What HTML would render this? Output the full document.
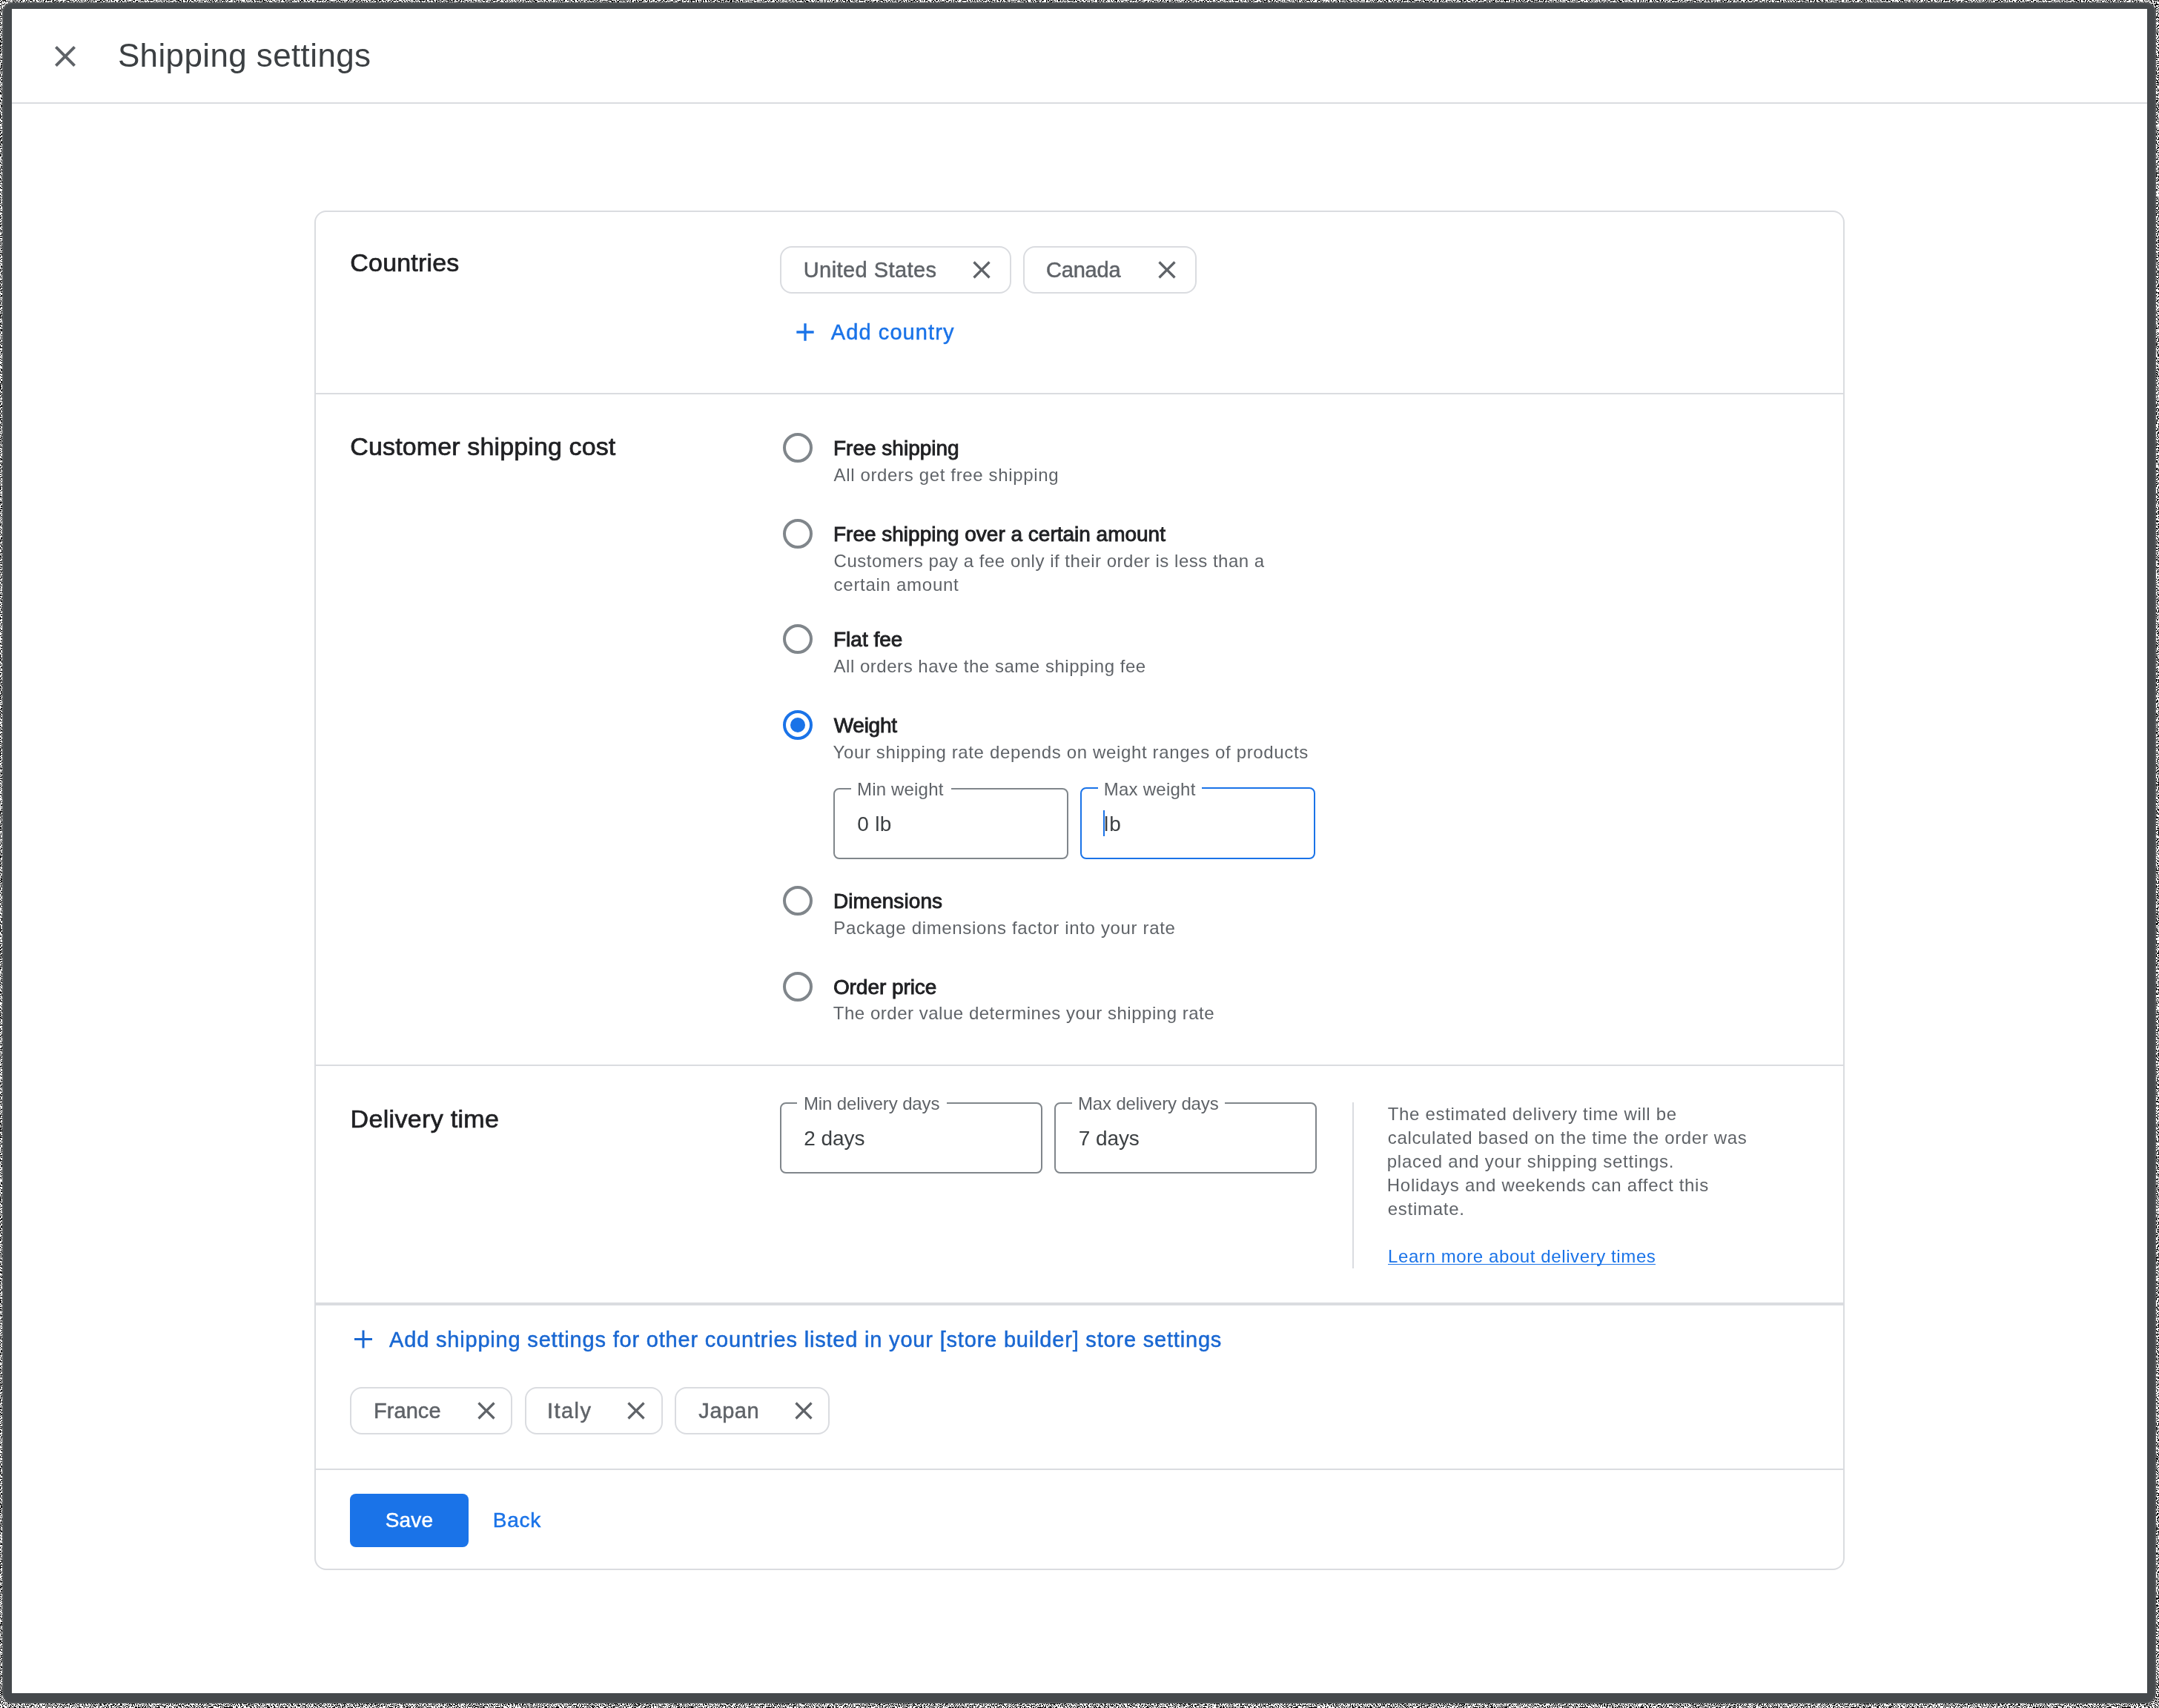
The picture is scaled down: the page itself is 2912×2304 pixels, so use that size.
<!DOCTYPE html>
<html lang="en">
<head>
<meta charset="utf-8">
<title>Shipping settings</title>
<style>
*{box-sizing:border-box;margin:0;padding:0}
html,body{width:2912px;height:2304px;overflow:hidden}
body{position:relative;background:#a6a6a6;font-family:"Liberation Sans",sans-serif}
.a{position:absolute}
#noise{position:absolute;left:0;top:0;width:2912px;height:2304px}
#frame{left:3px;top:3px;width:2904.5px;height:2295px;background:#45494c;border-radius:14px;box-shadow:inset 0 0 3px 0 #8a8a8a}
#win{left:16px;top:12px;width:2880px;height:2272px;background:#fff}
.hl{background:#dadce0}
.t{position:absolute;white-space:pre;line-height:1;font-weight:400;text-decoration:none;margin:0}
.m{-webkit-text-stroke:0.5px currentColor}
.m2{-webkit-text-stroke:0.7px currentColor}
.b{-webkit-text-stroke:0.9px currentColor}
#card{left:424px;top:284px;width:2064px;height:1834.4px;border:2px solid #dadce0;border-radius:16px}
.chip{border:2px solid #dadce0;border-radius:16px;background:#fff}
.radio{width:40px;height:40px;border:4px solid #80868b;border-radius:50%}
.radio.on{border-color:#1a73e8}
.radio.on::after{content:"";position:absolute;left:6px;top:6px;width:20px;height:20px;border-radius:50%;background:#1a73e8}
.field{border:2px solid #80868b;border-radius:8px}
.field.focus{border:2.5px solid #1a73e8}
.notch{background:#fff;height:6px}
svg{position:absolute;display:block}
</style>
</head>
<body>
<svg id="noise" width="2912" height="2304" viewBox="0 0 2912 2304">
<defs><filter id="nz" x="0" y="0" width="100%" height="100%" color-interpolation-filters="sRGB">
<feTurbulence type="fractalNoise" baseFrequency="0.7" numOctaves="2" seed="7" result="t"/>
<feColorMatrix in="t" type="matrix" values="1 0 0 0 0  1 0 0 0 0  1 0 0 0 0  0 0 0 0 1"/>
<feComponentTransfer><feFuncR type="linear" slope="60" intercept="-28"/><feFuncG type="linear" slope="60" intercept="-28"/><feFuncB type="linear" slope="60" intercept="-28"/></feComponentTransfer>
</filter></defs>
<rect x="0" y="0" width="2912" height="16" fill="#fff" filter="url(#nz)"/>
<rect x="0" y="2288" width="2912" height="16" fill="#fff" filter="url(#nz)"/>
<rect x="0" y="16" width="18" height="2272" fill="#fff" filter="url(#nz)"/>
<rect x="2894" y="16" width="18" height="2272" fill="#fff" filter="url(#nz)"/>
</svg>
<div class="a" id="frame"></div>
<div class="a" id="win"></div>

<!-- header -->
<div class="a hl" style="left:16px;top:138px;width:2880px;height:2px"></div>
<svg style="left:64px;top:52px" width="48" height="48" viewBox="0 0 24 24"><path fill="#5f6368" d="M19 6.41L17.59 5 12 10.59 6.41 5 5 6.41 10.59 12 5 17.59 6.41 19 12 13.41 17.59 19 19 17.59 13.41 12z"/></svg>

<!-- card -->
<div class="a" id="card"></div>
<div class="a hl" style="left:426px;top:530px;width:2060px;height:2px"></div>
<div class="a hl" style="left:426px;top:1436px;width:2060px;height:2px"></div>
<div class="a hl" style="left:426px;top:1756.8px;width:2060px;height:4px"></div>
<div class="a hl" style="left:426px;top:1981px;width:2060px;height:2px"></div>

<!-- country chips -->
<div class="a chip" style="left:1052px;top:332px;width:312px;height:64px"></div>
<div class="a chip" style="left:1380px;top:332px;width:234px;height:64px"></div>
<svg style="left:1304px;top:344px" width="40" height="40" viewBox="0 0 24 24"><path fill="#5f6368" d="M19 6.41L17.59 5 12 10.59 6.41 5 5 6.41 10.59 12 5 17.59 6.41 19 12 13.41 17.59 19 19 17.59 13.41 12z"/></svg>
<svg style="left:1554px;top:344px" width="40" height="40" viewBox="0 0 24 24"><path fill="#5f6368" d="M19 6.41L17.59 5 12 10.59 6.41 5 5 6.41 10.59 12 5 17.59 6.41 19 12 13.41 17.59 19 19 17.59 13.41 12z"/></svg>
<svg style="left:1066px;top:428px" width="40" height="40" viewBox="0 0 24 24"><path fill="#1a73e8" d="M19 13h-6v6h-2v-6H5v-2h6V5h2v6h6v2z"/></svg>

<!-- radios -->
<div class="a radio" style="left:1056px;top:584px"></div>
<div class="a radio" style="left:1056px;top:700px"></div>
<div class="a radio" style="left:1056px;top:842px"></div>
<div class="a radio on" style="left:1056px;top:958px"></div>
<div class="a radio" style="left:1056px;top:1194.5px"></div>
<div class="a radio" style="left:1056px;top:1310.5px"></div>

<!-- weight fields -->
<div class="a field" style="left:1124px;top:1062.5px;width:317px;height:96px"></div>
<div class="a notch" style="left:1148px;top:1060px;width:135px"></div>
<div class="a field focus" style="left:1457px;top:1062px;width:317px;height:96.5px"></div>
<div class="a notch" style="left:1481px;top:1060px;width:140px"></div>
<div class="a" style="left:1488px;top:1093px;width:2px;height:35px;background:#1a73e8"></div>

<!-- delivery fields -->
<div class="a field" style="left:1052px;top:1486.5px;width:354px;height:96px"></div>
<div class="a notch" style="left:1075px;top:1485px;width:202px"></div>
<div class="a field" style="left:1422px;top:1486.5px;width:354px;height:96px"></div>
<div class="a notch" style="left:1446px;top:1485px;width:206px"></div>
<div class="a hl" style="left:1824px;top:1487px;width:2px;height:224px"></div>

<div class="a" style="left:1872px;top:1704.9px;width:361px;height:1.5px;background:#1a73e8"></div>

<!-- other countries -->
<svg style="left:470px;top:1786px" width="40" height="40" viewBox="0 0 40 40"><path fill="#1967d2" d="M8 19h24v3H8zM18.5 8.500h3v24h-3z"/></svg>
<div class="a chip" style="left:472px;top:1870.5px;width:219px;height:64px"></div>
<div class="a chip" style="left:708.4px;top:1870.5px;width:185.2px;height:64px"></div>
<div class="a chip" style="left:910px;top:1870.5px;width:209.3px;height:64px"></div>
<svg style="left:636px;top:1882.6px" width="40" height="40" viewBox="0 0 24 24"><path fill="#5f6368" d="M19 6.41L17.59 5 12 10.59 6.41 5 5 6.41 10.59 12 5 17.59 6.41 19 12 13.41 17.59 19 19 17.59 13.41 12z"/></svg>
<svg style="left:838px;top:1882.6px" width="40" height="40" viewBox="0 0 24 24"><path fill="#5f6368" d="M19 6.41L17.59 5 12 10.59 6.41 5 5 6.41 10.59 12 5 17.59 6.41 19 12 13.41 17.59 19 19 17.59 13.41 12z"/></svg>
<svg style="left:1064px;top:1882.6px" width="40" height="40" viewBox="0 0 24 24"><path fill="#5f6368" d="M19 6.41L17.59 5 12 10.59 6.41 5 5 6.41 10.59 12 5 17.59 6.41 19 12 13.41 17.59 19 19 17.59 13.41 12z"/></svg>

<!-- footer buttons -->
<div class="a" style="left:472px;top:2014.5px;width:160px;height:72px;border-radius:8px;background:#1a73e8"></div>

<div class="a" id="tx" style="left:0;top:0;width:2912px;height:2304px;will-change:transform">
<h1 class="t" style="left:158.9px;top:53px;font-size:44px;letter-spacing:0.38px;color:#3c4043">Shipping settings</h1>
<h2 class="t m2" style="left:472.3px;top:337px;font-size:34px;letter-spacing:0.19px;color:#202124">Countries</h2>
<h2 class="t m2" style="left:472.3px;top:585px;font-size:34px;letter-spacing:0.13px;color:#202124">Customer shipping cost</h2>
<h2 class="t m2" style="left:472.6px;top:1492px;font-size:34px;letter-spacing:0.32px;color:#202124">Delivery time</h2>
<div class="t m" style="left:1083.7px;top:350px;font-size:29px;letter-spacing:0.44px;color:#5f6368">United States</div>
<div class="t m" style="left:1411.0px;top:350px;font-size:29px;letter-spacing:-0.20px;color:#5f6368">Canada</div>
<a class="t m" style="left:1120.8px;top:434px;font-size:29px;letter-spacing:1.09px;color:#1a73e8">Add country</a>
<div class="t b" style="left:1124.0px;top:591px;font-size:28px;letter-spacing:0.00px;color:#202124">Free shipping</div>
<div class="t b" style="left:1124.0px;top:707px;font-size:28px;letter-spacing:-0.01px;color:#202124">Free shipping over a certain amount</div>
<div class="t b" style="left:1124.0px;top:849px;font-size:28px;letter-spacing:0.00px;color:#202124">Flat fee</div>
<div class="t b" style="left:1124.7px;top:965px;font-size:28px;letter-spacing:-0.26px;color:#202124">Weight</div>
<div class="t b" style="left:1124.0px;top:1202px;font-size:28px;letter-spacing:0.09px;color:#202124">Dimensions</div>
<div class="t b" style="left:1123.9px;top:1318px;font-size:28px;letter-spacing:-0.06px;color:#202124">Order price</div>
<div class="t" style="left:1124.5px;top:629px;font-size:24px;letter-spacing:0.65px;color:#5f6368">All orders get free shipping</div>
<div class="t" style="left:1124.6px;top:745px;font-size:24px;letter-spacing:0.51px;color:#5f6368">Customers pay a fee only if their order is less than a</div>
<div class="t" style="left:1124.6px;top:777px;font-size:24px;letter-spacing:0.72px;color:#5f6368">certain amount</div>
<div class="t" style="left:1124.5px;top:887px;font-size:24px;letter-spacing:0.53px;color:#5f6368">All orders have the same shipping fee</div>
<div class="t" style="left:1123.5px;top:1003px;font-size:24px;letter-spacing:0.64px;color:#5f6368">Your shipping rate depends on weight ranges of products</div>
<div class="t" style="left:1124.3px;top:1240px;font-size:24px;letter-spacing:0.66px;color:#5f6368">Package dimensions factor into your rate</div>
<div class="t" style="left:1123.8px;top:1355px;font-size:24px;letter-spacing:0.52px;color:#5f6368">The order value determines your shipping rate</div>
<div class="t" style="left:1156.0px;top:1053px;font-size:24px;letter-spacing:0.18px;color:#5f6368">Min weight</div>
<div class="t" style="left:1488.8px;top:1053px;font-size:24px;letter-spacing:0.24px;color:#5f6368">Max weight</div>
<div class="t" style="left:1084.0px;top:1477px;font-size:24px;letter-spacing:-0.12px;color:#5f6368">Min delivery days</div>
<div class="t" style="left:1454.0px;top:1477px;font-size:24px;letter-spacing:-0.15px;color:#5f6368">Max delivery days</div>
<div class="t" style="left:1156.2px;top:1098px;font-size:28px;letter-spacing:0.37px;color:#3c4043">0 lb</div>
<div class="t" style="left:1489.1px;top:1098px;font-size:28px;letter-spacing:0.90px;color:#3c4043">lb</div>
<div class="t" style="left:1084.2px;top:1522px;font-size:28px;letter-spacing:-0.04px;color:#3c4043">2 days</div>
<div class="t" style="left:1454.8px;top:1522px;font-size:28px;letter-spacing:-0.10px;color:#3c4043">7 days</div>
<div class="t" style="left:1871.8px;top:1491px;font-size:24px;letter-spacing:0.66px;color:#5f6368">The estimated delivery time will be</div>
<div class="t" style="left:1871.8px;top:1523px;font-size:24px;letter-spacing:0.64px;color:#5f6368">calculated based on the time the order was</div>
<div class="t" style="left:1870.8px;top:1555px;font-size:24px;letter-spacing:0.72px;color:#5f6368">placed and your shipping settings.</div>
<div class="t" style="left:1870.8px;top:1587px;font-size:24px;letter-spacing:0.71px;color:#5f6368">Holidays and weekends can affect this</div>
<div class="t" style="left:1871.8px;top:1619px;font-size:24px;letter-spacing:0.72px;color:#5f6368">estimate.</div>
<a class="t u" style="left:1872.0px;top:1683px;font-size:24px;letter-spacing:0.60px;color:#1a73e8">Learn more about delivery times</a>
<a class="t m" style="left:525.1px;top:1793px;font-size:29px;letter-spacing:0.81px;color:#1967d2">Add shipping settings for other countries listed in your [store builder] store settings</a>
<div class="t m" style="left:504.0px;top:1889px;font-size:29px;letter-spacing:0.06px;color:#5f6368">France</div>
<div class="t m" style="left:738.0px;top:1889px;font-size:29px;letter-spacing:1.43px;color:#5f6368">Italy</div>
<div class="t m" style="left:942.3px;top:1889px;font-size:29px;letter-spacing:0.60px;color:#5f6368">Japan</div>
<div class="t m" style="left:519.7px;top:2037px;font-size:28px;letter-spacing:0.20px;color:#fff">Save</div>
<a class="t m" style="left:664.8px;top:2037px;font-size:28px;letter-spacing:0.73px;color:#1a73e8">Back</a>
</div>
</body>
</html>
